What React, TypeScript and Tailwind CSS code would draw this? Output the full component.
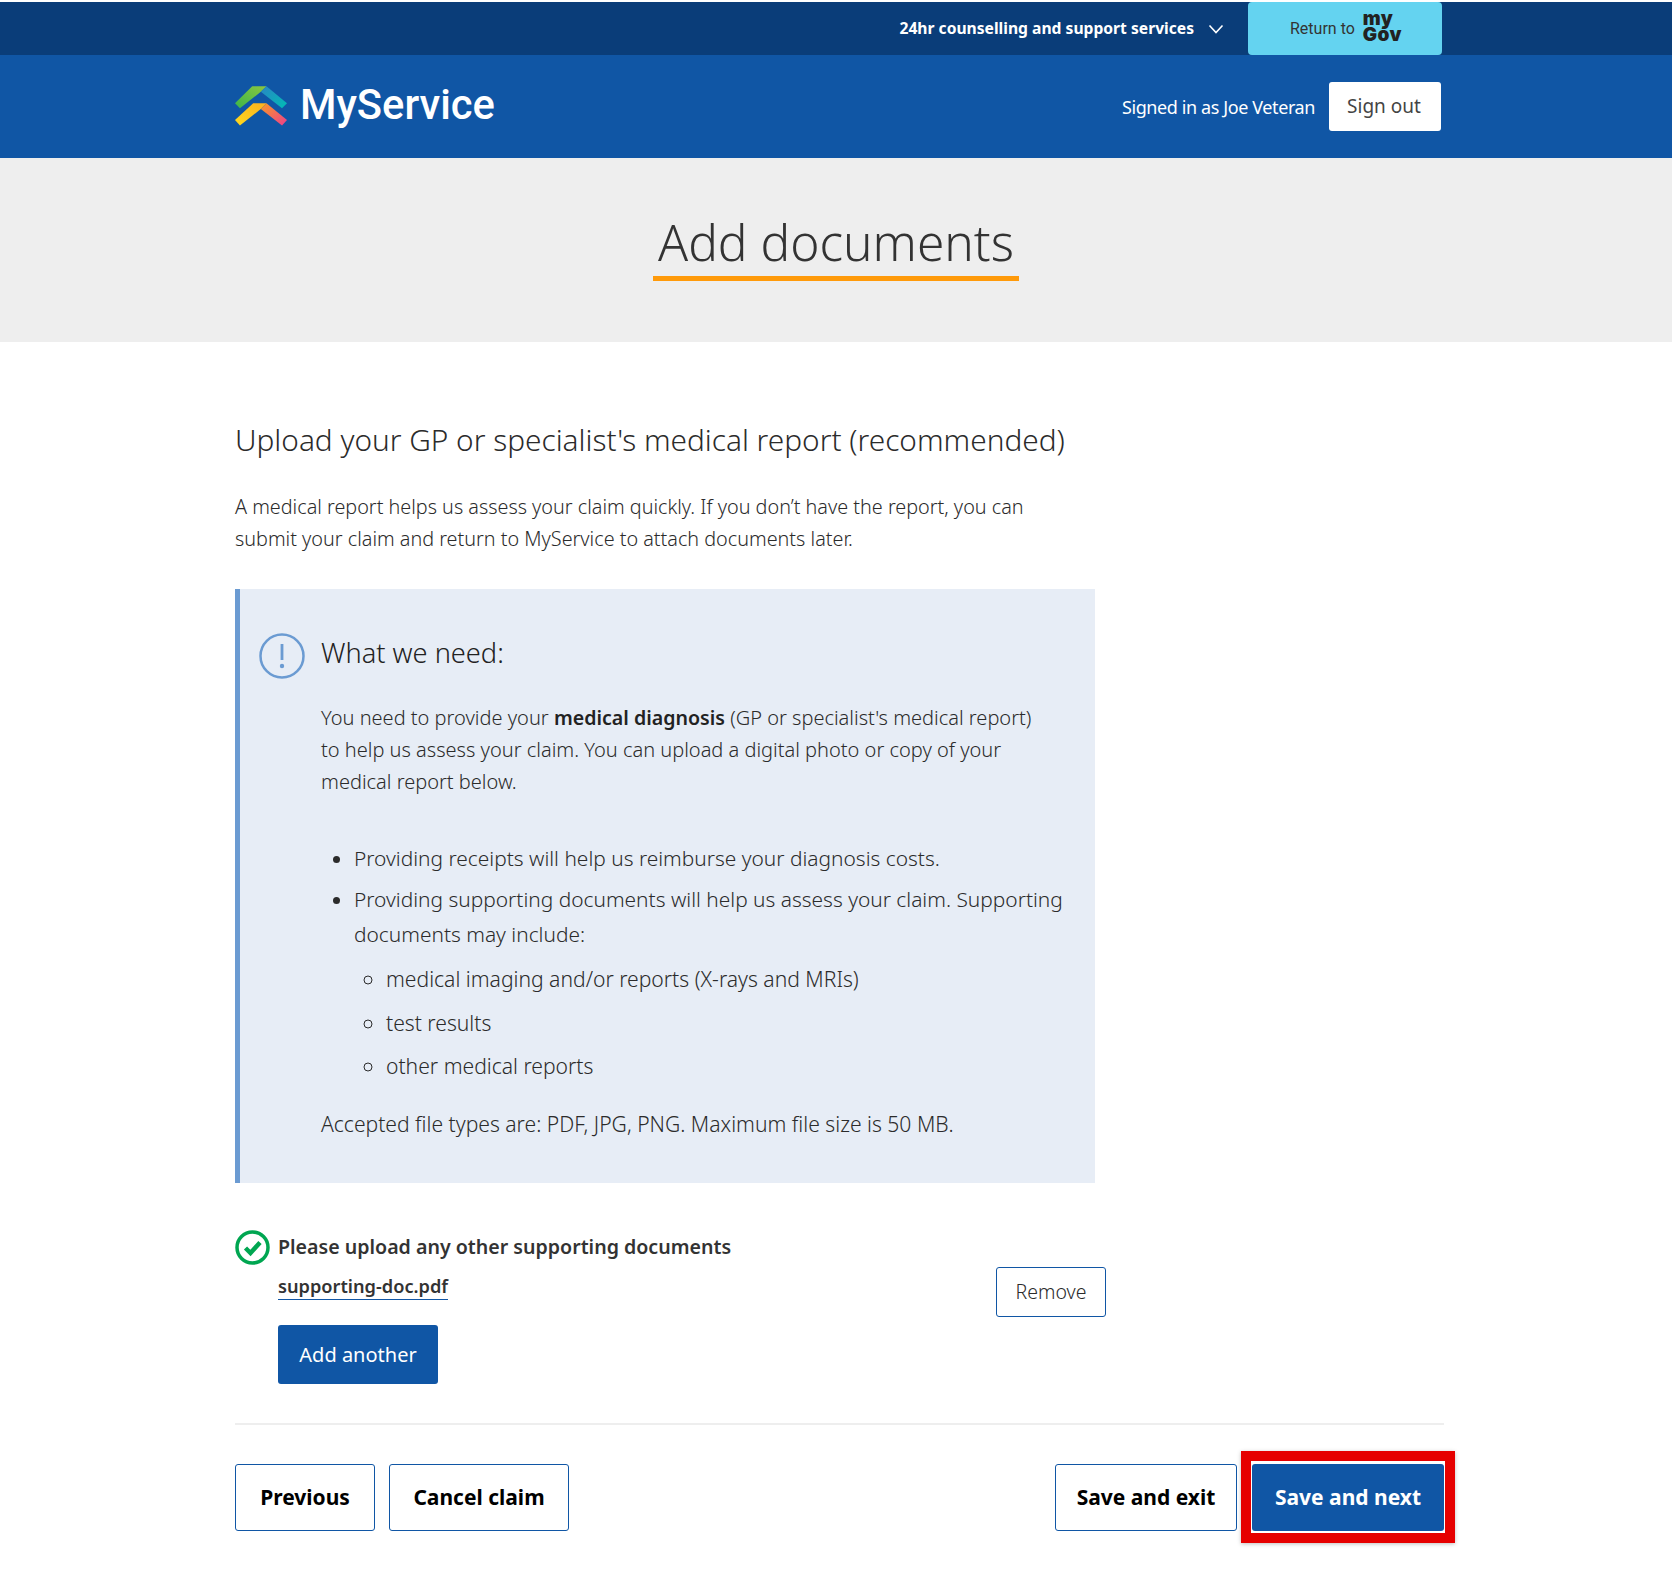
import React from "react";

const Logo = () => (
  <svg width="52" height="40" viewBox="30 33 157 120" className="shrink-0">
    <defs>
      <linearGradient id="g1" x1="0" y1="1" x2="1" y2="0">
        <stop offset="0" stopColor="#3bb54a" />
        <stop offset="1" stopColor="#8cc63f" />
      </linearGradient>
      <linearGradient id="g2" x1="0" y1="0" x2="1" y2="1">
        <stop offset="0" stopColor="#2a86c4" />
        <stop offset="1" stopColor="#00bcb4" />
      </linearGradient>
      <linearGradient id="g3" x1="0" y1="1" x2="1" y2="0">
        <stop offset="0" stopColor="#ffd91e" />
        <stop offset="1" stopColor="#fbb01f" />
      </linearGradient>
      <linearGradient id="g4" x1="0" y1="0" x2="1" y2="1">
        <stop offset="0" stopColor="#f79a25" />
        <stop offset="1" stopColor="#ec3f8c" />
      </linearGradient>
    </defs>
    <polygon points="30,85 82,33 125,33 108,50 45,100" fill="url(#g1)" />
    <polygon points="125,33 187,85 172,100 108,50" fill="url(#g2)" />
    <polygon points="30,135 85,85 125,85 108,102 45,152" fill="url(#g3)" />
    <polygon points="125,85 187,135 172,152 108,102" fill="url(#g4)" />
  </svg>
);

const outline =
  "flex items-center justify-center h-[67px] rounded-[3px] border border-[#1056a5] bg-white text-[21px] font-bold text-black";

export default function App() {
  return (
    <div className="min-h-[1570px] bg-white pt-[2px] text-[#2b2b2b] font-['Noto_Sans',sans-serif]">
      <div className="h-[53px] bg-[#0a3d79]">
        <div className="ml-[235px] w-[1207px] h-full flex items-center justify-end">
          <span className="text-[15.65px] font-bold text-white">24hr counselling and support services</span>
          <svg width="16" height="10" viewBox="0 0 16 10" className="ml-[14px] mr-[24px]" fill="none">
            <path d="M1.5 1.5 L8 8.5 L14.500 1.5" stroke="#ffffff" strokeWidth="1.6" />
          </svg>
          <div className="w-[194px] h-full rounded-[4px] bg-[#64d3f0] flex items-center pl-[42px] gap-[8px]">
            <span className="pt-[1px] text-[16px] text-[#333333] font-['Roboto',sans-serif]">Return to</span>
            <span className="-mt-[3px] flex flex-col text-[19px] leading-[16px] tracking-[0.4px] font-black text-[#222222] font-['Inter',sans-serif]">
              <span>my</span>
              <span>Gov</span>
            </span>
          </div>
        </div>
      </div>

      <div className="h-[103px] bg-[#1056a5]">
        <div className="ml-[235px] w-[1206px] h-full flex items-center justify-between">
          <div className="flex items-center gap-[13px] -mt-[2px]">
            <Logo />
            <span className="-mt-[2px] text-[41.7px] leading-[48px] font-medium text-white font-['Roboto',sans-serif]">MyService</span>
          </div>
          <div className="flex items-center gap-[14px]">
            <span className="pt-[2px] text-[18px] tracking-[-0.4px] text-white">Signed in as Joe Veteran</span>
            <div className="w-[112px] h-[49px] pr-[2px] rounded-[3px] bg-white flex items-center justify-center text-[19px] text-[#444444]">
              Sign out
            </div>
          </div>
        </div>
      </div>

      <div className="h-[184px] bg-[#eeeeee] flex justify-center pt-[50px]">
        <h1 className="h-[73px] w-[366px] whitespace-nowrap border-b-[5px] border-[#ff9a0a] text-center text-[49.6px] leading-[68px] font-light text-[#333333]">
          Add documents
        </h1>
      </div>

      <main className="ml-[235px] w-[1209px] pt-[78px] pb-[36px]">
        <h2 className="text-[29.8px] leading-[40px] font-light">
          Upload your GP or specialist's medical report (recommended)
        </h2>
        <p className="mt-[31px] w-[800px] text-[19.8px] leading-[32px] font-light">
          A medical report helps us assess your claim quickly. If you don’t have the report, you can submit your claim and return to MyService to attach documents later.
        </p>

        <section className="mt-[34px] w-[860px] h-[594px] border-l-[5px] border-[#6b9bd2] bg-[#e7edf6] pt-[46px] pl-[81px] pr-[25px] relative">
          <svg width="46" height="46" viewBox="0 0 46 46" className="absolute left-[19px] top-[44px]" fill="none">
            <circle cx="23" cy="23" r="21.500" stroke="#6b9bd2" strokeWidth="2.500" />
            <path d="M23 11 V27" stroke="#6b9bd2" strokeWidth="2.800" />
            <circle cx="23" cy="33" r="2.200" fill="#6b9bd2" />
          </svg>
          <h3 className="text-[27.2px] leading-[36px] font-light text-[#222222]">What we need:</h3>
          <p className="mt-[31px] pr-[30px] text-[20px] leading-[32px] font-light">
            You need to provide your <b className="text-[19.6px] font-semibold text-[#222222]">medical diagnosis</b> (GP or specialist's medical report) to help us assess your claim. You can upload a digital photo or copy of your medical report below.
          </p>
          <ul className="mt-[44px] list-disc pl-[33px] text-[20.9px] leading-[32px] font-light">
            <li>Providing receipts will help us reimburse your diagnosis costs.</li>
            <li className="mt-[8px] leading-[35px]">
              Providing supporting documents will help us assess your claim. Supporting documents may include:
              <ul className="list-[circle] pl-[32px] text-[21.1px]">
                <li className="mt-[11px] leading-[32px]">medical imaging and/or reports (X-rays and MRIs)</li>
                <li className="mt-[11.7px] leading-[32px]">test results</li>
                <li className="mt-[11.7px] leading-[32px]">other medical reports</li>
              </ul>
            </li>
          </ul>
          <p className="mt-[26px] text-[21.1px] leading-[32px] font-light">
            Accepted file types are: PDF, JPG, PNG. Maximum file size is 50 MB.
          </p>
        </section>

        <div className="mt-[47px] w-[871px] flex justify-between">
          <div className="flex gap-[8px]">
            <svg width="35" height="35" viewBox="0 0 35 35" fill="none" className="shrink-0">
              <circle cx="17.500" cy="17.500" r="15.500" stroke="#00a651" strokeWidth="3.500" />
              <path d="M10.500 18 L15.500 23 L25 12.500" stroke="#00a651" strokeWidth="4.500" />
            </svg>
            <div className="pt-[1px]">
              <div className="text-[19.6px] leading-[32px] font-semibold text-[#333333]">Please upload any other supporting documents</div>
              <div className="mt-[11px] w-max border-b border-[#1056a5] text-[18.2px] leading-[25px] font-semibold text-[#333333]">supporting-doc.pdf</div>
              <div className="mt-[25px] w-[160px] h-[59px] rounded-[3px] bg-[#1056a5] flex items-center justify-center text-[20px] text-white">Add another</div>
            </div>
          </div>
          <div className="mt-[37px] w-[110px] h-[50px] rounded-[3px] border border-[#1056a5] flex items-center justify-center text-[19.5px] font-light">Remove</div>
        </div>

        <div className="mt-[39px] h-[2px] bg-[#eeeeee]" />

        <div className="mt-[39px] flex justify-between">
          <div className="flex gap-[14px]">
            <div className={`${outline} w-[140px]`}>Previous</div>
            <div className={`${outline} w-[180px]`}>Cancel claim</div>
          </div>
          <div className="flex gap-[15px]">
            <div className={`${outline} w-[182px]`}>Save and exit</div>
            <div className="relative w-[192px] h-[67px] rounded-[3px] bg-[#1056a5] flex items-center justify-center text-[21px] font-bold text-white">
              Save and next
              <div className="absolute -left-[11px] -right-[11px] -top-[13px] -bottom-[12px] border-[10px] border-[#e60000] shadow-[0_1px_4px_rgba(0,0,0,0.25)]" />
            </div>
          </div>
        </div>
      </main>
    </div>
  );
}
